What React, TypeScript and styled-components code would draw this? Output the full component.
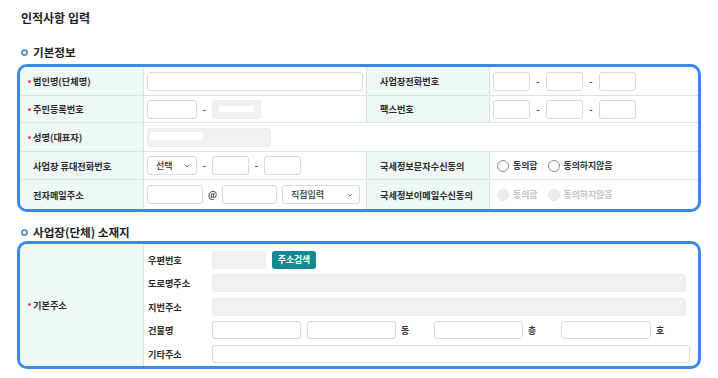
import React from "react";
import styled, { createGlobalStyle } from "styled-components";

const Global = createGlobalStyle`
  html, body { margin: 0; padding: 0; background: #fff; }
  body { font-family: "Noto Sans CJK KR", "Noto Sans", sans-serif; color: #333; }
  * { box-sizing: border-box; }
`;

const Page = styled.div`
  width: 718px;
  padding: 0 17px;
`;

const Title = styled.h1`
  margin: 0;
  height: 34px;
  display: flex;
  align-items: center;
  padding-left: 4px;
  font-size: 12px;
  font-weight: 700;
  color: #222;
`;

const SectionHead = styled.h2<{ $mt: number; $mb: number }>`
  margin: ${(p) => p.$mt}px 0 ${(p) => p.$mb}px;
  height: 16px;
  display: flex;
  align-items: center;
  gap: 5px;
  padding-left: 4px;
  font-size: 11.6px;
  font-weight: 700;
  color: #222;
`;

const Box = styled.div`
  border: 3px solid #3b87ea;
  border-radius: 10px;
  overflow: hidden;
  background: #fff;
`;

const InfoGrid = styled.div`
  display: grid;
  grid-template-columns: 124px 223px 123px 1fr;
  grid-template-rows: 29px 27px 29px 28px 29px;
`;

const Label = styled.div<{ $last?: boolean }>`
  background: #eff8f6;
  border-right: 1px solid #d3e7e3;
  border-bottom: ${(p) => (p.$last ? "none" : "1px solid #d3e7e3")};
  display: flex;
  align-items: center;
  padding-left: 13px;
  font-size: 9.2px;
  font-weight: 600;
  color: #2a2a2a;
  white-space: nowrap;
`;

const Star = styled.span`
  width: 3px;
  height: 3px;
  border-radius: 50%;
  background: #e2437a;
  margin-left: -5px;
  margin-right: 2px;
  flex: none;
`;

const Value = styled.div<{ $last?: boolean; $span?: number; $edge?: boolean }>`
  grid-column: span ${(p) => p.$span ?? 1};
  border-right: ${(p) => (p.$edge ? "1px solid #d3e7e3" : "none")};
  border-bottom: ${(p) => (p.$last ? "none" : "1px solid #d3e7e3")};
  display: flex;
  align-items: center;
  padding: 0 3px;
  font-size: 9px;
`;

const Input = styled.div<{ $w: number; $h?: number }>`
  width: ${(p) => p.$w}px;
  height: ${(p) => p.$h ?? 19}px;
  border: 1px solid #d9d9d9;
  border-radius: 3px;
  background: #fff;
  flex: none;
`;

const Disabled = styled.div<{ $w: number; $h?: number; $top?: boolean }>`
  width: ${(p) => p.$w}px;
  height: ${(p) => p.$h ?? 19}px;
  border: 1px solid #ececec;
  border-radius: 3px;
  background: #f1f1f1;
  flex: none;
  display: flex;
  align-items: ${(p) => (p.$top ? "flex-start" : "center")};
  padding: ${(p) => (p.$top ? "3px 2px" : "0 6px")};
`;

const Mask = styled.div<{ $w: number; $h: number }>`
  width: ${(p) => p.$w}px;
  height: ${(p) => p.$h}px;
  background: #fff;
`;

const Sep = styled.span<{ $w?: number }>`
  width: ${(p) => p.$w ?? 15}px;
  text-align: center;
  color: #444;
  font-size: 9px;
  font-weight: 600;
  flex: none;
`;

const Select = styled.div<{ $w: number }>`
  width: ${(p) => p.$w}px;
  height: 19px;
  border: 1px solid #d9d9d9;
  border-radius: 3px;
  background: #fff;
  display: flex;
  align-items: center;
  justify-content: space-between;
  padding: 0 6px 0 8px;
  margin-left: ${(p) => (p.$w > 60 ? 5 : 0)}px;
  font-size: 9px;
  font-weight: 500;
  color: #333;
  flex: none;
`;

const Chevron = () => (
  <svg width="6" height="4" viewBox="0 0 6 4">
    <path d="M0.7 0.8 L3 3 L5.3 0.8" fill="none" stroke="#666" strokeWidth="0.9" />
  </svg>
);

const RadioGroup = styled.label<{ $disabled?: boolean }>`
  display: flex;
  align-items: center;
  gap: 4px;
  margin-left: 4px;
  margin-right: 6px;
  font-size: 8.9px;
  font-weight: 600;
  color: ${(p) => (p.$disabled ? "#c2c2c2" : "#333")};
`;

const RadioCircle = styled.span<{ $disabled?: boolean }>`
  width: 12px;
  height: 12px;
  border-radius: 50%;
  border: 1px solid ${(p) => (p.$disabled ? "#e6e6e6" : "#8a8a8a")};
  background: ${(p) => (p.$disabled ? "#ececec" : "#fff")};
  flex: none;
`;

const AddrGrid = styled.div`
  display: grid;
  grid-template-columns: 124px 1fr;
`;

const AddrLabel = styled.div`
  background: #eff8f6;
  border-right: 1px solid #d3e7e3;
  display: flex;
  align-items: center;
  padding-left: 13px;
  font-size: 9.2px;
  font-weight: 600;
  color: #2a2a2a;
`;

const AddrRows = styled.div`
  display: flex;
  flex-direction: column;
  padding: 4px 0 0;
`;

const AddrRow = styled.div`
  height: 23.5px;
  display: flex;
  align-items: center;
  padding-left: 4px;
`;

const SubLabel = styled.span`
  width: 64px;
  font-size: 9.2px;
  font-weight: 600;
  color: #2a2a2a;
  flex: none;
`;

const Button = styled.button`
  margin-left: 6px;
  width: 44px;
  height: 18px;
  border: none;
  border-radius: 3px;
  background: #138a8f;
  color: #fff;
  font-family: inherit;
  font-size: 8.8px;
  font-weight: 700;
  padding: 0;
`;

const Unit = styled.span<{ $w: number }>`
  width: ${(p) => p.$w}px;
  padding-left: 5px;
  font-size: 8.8px;
  font-weight: 600;
  color: #333;
  flex: none;
`;

const Gap = styled.span<{ $w: number }>`
  width: ${(p) => p.$w}px;
  flex: none;
`;

const HeadIcon = () => (
  <svg width="7" height="7" viewBox="0 0 7 7">
    <circle cx="3.5" cy="3.5" r="2.6" fill="none" stroke="#3a7fdc" strokeWidth="1.5" />
  </svg>
);

const Phone = () => (
  <>
    <Input $w={37} />
    <Sep $w={16}>-</Sep>
    <Input $w={37} />
    <Sep $w={16}>-</Sep>
    <Input $w={37} />
  </>
);

export default function App() {
  return (
    <>
      <Global />
      <Page>
        <Title>인적사항 입력</Title>
        <SectionHead $mt={10} $mb={4}>
          <HeadIcon />
          기본정보
        </SectionHead>
        <Box>
          <InfoGrid>
            <Label>
              <Star />
              법인명(단체명)
            </Label>
            <Value $edge>
              <Input $w={216} />
            </Value>
            <Label>사업장전화번호</Label>
            <Value>
              <Phone />
            </Value>

            <Label>
              <Star />
              주민등록번호
            </Label>
            <Value $edge>
              <Input $w={50} />
              <Sep>-</Sep>
              <Disabled $w={49}>
                <Mask $w={39} $h={6} />
              </Disabled>
            </Value>
            <Label>팩스번호</Label>
            <Value>
              <Phone />
            </Value>

            <Label>
              <Star />
              성명(대표자)
            </Label>
            <Value $span={3}>
              <Disabled $w={124} $top>
                <Mask $w={53} $h={8} />
              </Disabled>
            </Value>

            <Label>사업장 휴대전화번호</Label>
            <Value $edge>
              <Select $w={50}>
                선택
                <Chevron />
              </Select>
              <Sep>-</Sep>
              <Input $w={37} />
              <Sep>-</Sep>
              <Input $w={37} />
            </Value>
            <Label>국세정보문자수신동의</Label>
            <Value>
              <RadioGroup>
                <RadioCircle />
                동의함
              </RadioGroup>
              <RadioGroup>
                <RadioCircle />
                동의하지않음
              </RadioGroup>
            </Value>

            <Label $last>전자메일주소</Label>
            <Value $last $edge>
              <Input $w={56} />
              <Sep $w={19}>@</Sep>
              <Input $w={55} />
              <Select $w={78}>
                직접입력
                <Chevron />
              </Select>
            </Value>
            <Label $last>국세정보이메일수신동의</Label>
            <Value $last>
              <RadioGroup $disabled>
                <RadioCircle $disabled />
                동의함
              </RadioGroup>
              <RadioGroup $disabled>
                <RadioCircle $disabled />
                동의하지않음
              </RadioGroup>
            </Value>
          </InfoGrid>
        </Box>

        <SectionHead $mt={12} $mb={1}>
          <HeadIcon />
          사업장(단체) 소재지
        </SectionHead>
        <Box>
          <AddrGrid>
            <AddrLabel>
              <Star />
              기본주소
            </AddrLabel>
            <AddrRows>
              <AddrRow>
                <SubLabel>우편번호</SubLabel>
                <Disabled $w={54} $h={18} />
                <Button>주소검색</Button>
              </AddrRow>
              <AddrRow>
                <SubLabel>도로명주소</SubLabel>
                <Disabled $w={474} $h={18} />
              </AddrRow>
              <AddrRow>
                <SubLabel>지번주소</SubLabel>
                <Disabled $w={474} $h={18} />
              </AddrRow>
              <AddrRow>
                <SubLabel>건물명</SubLabel>
                <Input $w={89} $h={18} />
                <Gap $w={6} />
                <Input $w={89} $h={18} />
                <Unit $w={38}>동</Unit>
                <Input $w={89} $h={18} />
                <Unit $w={38}>층</Unit>
                <Input $w={90} $h={18} />
                <Unit $w={14}>
                  <Gap $w={3} />호
                </Unit>
              </AddrRow>
              <AddrRow>
                <SubLabel>기타주소</SubLabel>
                <Input $w={478} $h={18} />
              </AddrRow>
            </AddrRows>
          </AddrGrid>
        </Box>
      </Page>
    </>
  );
}
